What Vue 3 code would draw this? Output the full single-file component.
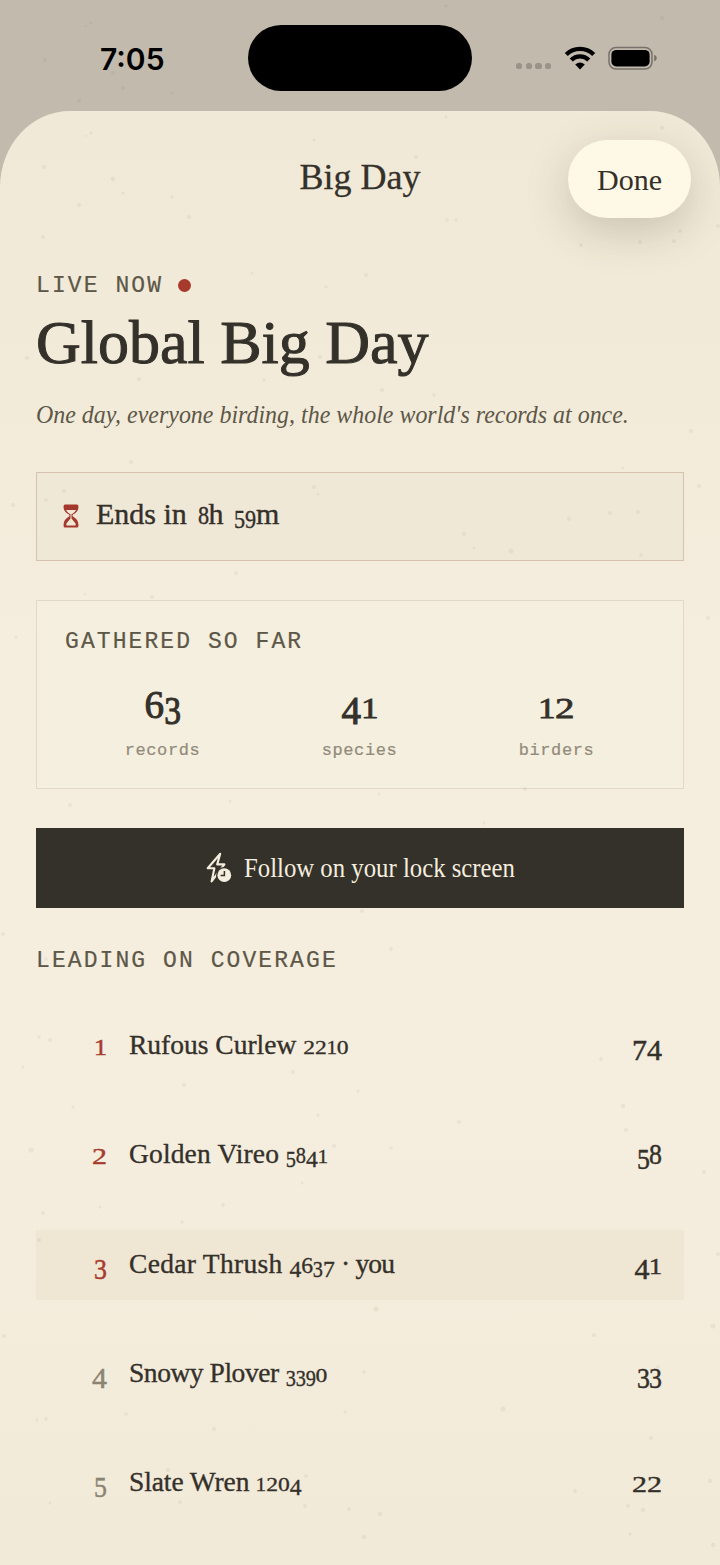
<script setup>
import { h } from 'vue'

// Old-style figures: 0-2 sit at x-height, 3/4/5/7/9 hang below the baseline.
const figureClass = (d) => ({
  fig: true,
  low: '012'.includes(d),
  hang: '34579'.includes(d),
  slim: '13589'.includes(d),
})
const Figures = (props) =>
  h('span', { class: 'figures' }, String(props.value).split('').map((d) => h('span', { class: figureClass(d) }, d)))
Figures.props = ['value']

const stats = [
  { value: 63, label: 'records' },
  { value: 41, label: 'species' },
  { value: 12, label: 'birders' },
]

const leaders = [
  { rank: 1, name: 'Rufous Curlew', num: '2210', score: 74, track: 0 },
  { rank: 2, name: 'Golden Vireo', num: '5841', score: 58, track: 0.15 },
  { rank: 3, name: 'Cedar Thrush', num: '4637', score: 41, track: 0.3, you: true },
  { rank: 4, name: 'Snowy Plover', num: '3390', score: 33, track: -0.45 },
  { rank: 5, name: 'Slate Wren', num: '1204', score: 22, track: -0.1 },
]

// Paper flecks: x, y, radius
const flecks = [
  [91, 23, 1.5], [86, 26, 1], [45, 60, 2], [113, 73, 2], [123, 88, 2], [172, 93, 1.5], [79, 101, 2], [662, 18, 2], [446, 6, 1.5],
  [91, 133, 1.5], [86, 136, 1], [44, 167, 2], [113, 179, 2.3], [123, 193, 1.6], [172, 197, 1.6], [79, 205, 2], [189, 217, 2], [43, 237, 2],
  [314, 140, 1.5], [416, 157, 2], [447, 220, 1.7], [456, 220, 1.7], [446, 117, 1.5], [662, 128, 2], [581, 245, 2], [640, 242, 2], [674, 241, 2], [680, 231, 2], [718, 226, 2],
  [252, 273, 1.6], [366, 275, 2], [326, 287, 1.6], [27, 358, 2], [139, 379, 2], [320, 357, 2], [264, 380, 1.5], [382, 390, 2], [434, 395, 1.8],
  [691, 431, 2], [699, 486, 2], [623, 468, 1.3], [131, 462, 2], [64, 491, 2], [46, 500, 1.8], [314, 487, 2], [318, 494, 1.5],
  [569, 519, 2], [610, 513, 2], [638, 512, 2], [464, 534, 2], [474, 548, 1.5], [511, 551, 2.5], [641, 555, 1.8], [236, 573, 2], [152, 597, 2], [85, 594, 1.3], [708, 618, 2], [13, 505, 2], [16, 637, 1.5],
  [379, 794, 1.5], [525, 789, 2], [484, 823, 1.5], [362, 911, 2], [46, 959, 1.7], [391, 949, 2], [3, 934, 2], [70, 805, 2], [230, 801, 1.5],
  [39, 1037, 1.8], [50, 1040, 2], [23, 1067, 1.6], [184, 1085, 2], [293, 1072, 2], [358, 1091, 1.6], [73, 1107, 1.6], [318, 1115, 1.6], [31, 1150, 2.6], [334, 1146, 2], [391, 1148, 1.8], [302, 1183, 1.5], [223, 1205, 2], [100, 1207, 1.5],
  [601, 1059, 2], [623, 1106, 2.2], [626, 1130, 2], [459, 1122, 2], [704, 1172, 2], [43, 1213, 2], [182, 1222, 1.8], [39, 1240, 2], [718, 1254, 2], [376, 1309, 2.6], [4, 1336, 2], [713, 1326, 2.5], [594, 1335, 2], [658, 1367, 1.8],
  [126, 1414, 1.8], [46, 1419, 1.8], [37, 1420, 1.5], [214, 1429, 2], [345, 1412, 1.5], [364, 1372, 1.8], [503, 1409, 2.6], [651, 1438, 2], [168, 1470, 2], [306, 1476, 2], [180, 1502, 2], [305, 1506, 2], [349, 1509, 2], [380, 1514, 2.3], [364, 1537, 2.3], [50, 1503, 1.5],
  [710, 1481, 2.2], [628, 1506, 2], [643, 1510, 2.3], [630, 1534, 1.7], [713, 1545, 2.2], [575, 1491, 2],
]
</script>

<template>
  <div class="screen">
    <header class="status">
      <div class="clock">7:05</div>
      <div class="island"></div>
      <div class="signals">
        <div class="cell"><i v-for="n in 4" :key="n"></i></div>
        <svg class="wifi" width="32" height="24" viewBox="0 0 32 24">
          <g fill="none" stroke="#000" stroke-width="4.3">
            <path d="M2.3 8.6A19.4 19.4 0 0 1 29.7 8.6" />
            <path d="M7.2 14A12.4 12.4 0 0 1 24.8 14" />
          </g>
          <path d="M16 23.4 11.2 18.6Q16 14.2 20.8 18.6Z" />
        </svg>
        <svg class="battery" width="50" height="24" viewBox="0 0 50 24">
          <rect x="1" y="1.4" width="43" height="21.6" rx="7" fill="none" stroke="#77716a" stroke-width="1.5" />
          <rect x="3.4" y="3.9" width="38.2" height="16.6" rx="4.8" />
          <path d="M46.2 8.7Q48.8 9.6 48.8 12.1Q48.8 14.7 46.2 15.6Z" fill="#77716a" />
        </svg>
      </div>
    </header>

    <main class="sheet">
      <div class="bar">
        <h1>Big Day</h1>
        <button class="done">Done</button>
      </div>

      <section class="content">
        <div class="live label"><span>LIVE NOW</span><i></i></div>
        <h2>Global Big Day</h2>
        <p class="tagline">One day, everyone birding, the whole world's records at once.</p>

        <div class="ends">
          <svg width="16" height="24" viewBox="0 0 16 24">
            <path d="M2 .5H14Q15.4.5 15.4 2V3.4Q15.4 7.6 10 10.6Q9 11.5 10 12.6Q15.4 15.6 15.4 20.6V22Q15.4 23.5 14 23.5H2Q.6 23.5.6 22V20.6Q.6 15.6 6 12.6Q7 11.5 6 10.6Q.6 7.6.6 3.4V2Q.6.5 2 .5Z" fill="#a5382c" />
            <path d="M3 6H13Q12 8.2 9.2 10.1H6.8Q4 8.2 3 6Z" fill="#f0e8d7" />
            <path d="M7.5 10H8.5V14.5L12.6 19.4V21.4H3.4V19.4L7.5 14.5Z" fill="#f0e8d7" />
          </svg>
          <span class="ends-text">Ends in <Figures value="8" />h <Figures value="59" />m</span>
        </div>

        <div class="gathered">
          <div class="label">GATHERED SO FAR</div>
          <div class="stats">
            <div v-for="s in stats" :key="s.label" class="stat">
              <strong><Figures :value="s.value" /></strong>
              <span>{{ s.label }}</span>
            </div>
          </div>
        </div>

        <button class="follow">
          <svg width="26" height="32" viewBox="0 0 26 32">
            <path d="M14.2 1.8 1.7 16.2H8.4L5.6 29.4 18.4 12.4H11.2Z" fill="none" stroke="#f5eedf" stroke-width="2.1" stroke-linejoin="round" />
            <circle cx="18.3" cy="23.2" r="8.2" fill="#34302a" />
            <circle cx="18.3" cy="23.2" r="6.9" fill="#f5eedf" />
            <path d="M18.4 19.1V23.5H14.6" fill="none" stroke="#34302a" stroke-width="1.5" />
          </svg>
          <span>Follow on your lock screen</span>
        </button>

        <div class="label leading">LEADING ON COVERAGE</div>
        <ol>
          <li v-for="l in leaders" :key="l.rank" :class="{ you: l.you, top: l.rank < 4 }">
            <span class="rank"><Figures :value="l.rank" /></span>
            <span class="name"><span :style="{ letterSpacing: l.track + 'px' }">{{ l.name }}</span>&nbsp;<Figures :value="l.num" /><span v-if="l.you" class="me"> · you</span></span>
            <span class="score"><Figures :value="l.score" /></span>
          </li>
        </ol>
      </section>
    </main>

    <svg class="flecks" width="720" height="1565" viewBox="0 0 720 1565">
      <circle v-for="(f, i) in flecks" :key="i" :cx="f[0]" :cy="f[1]" :r="f[2]" />
    </svg>
  </div>
</template>

<style>
body { background: #c2baac; }
</style>

<style scoped>
* { box-sizing: border-box; margin: 0; padding: 0; }
.screen {
  position: relative; width: 720px; height: 1565px; overflow: hidden;
  background: #c2baac; color: #34302a;
  font-family: "Liberation Serif", serif;
}
.flecks { position: absolute; left: 0; top: 0; fill: #77684a; opacity: .08; pointer-events: none; }
.status { position: relative; height: 111px; }
.clock {
  position: absolute; left: 100px; top: 39px;
  font: 600 30px/40px Inter, sans-serif; color: #000;
}
.island { position: absolute; left: 248px; top: 25px; width: 224px; height: 66px; border-radius: 33px; background: #000; }
.signals { position: absolute; left: 516px; top: 46px; display: flex; height: 24px; }
.cell { display: flex; gap: 3.4px; padding-top: 17px; width: 48px; }
.cell i { width: 6.3px; height: 6.3px; border-radius: 2.6px; background: #9a9387; }
.battery { margin-left: 12px; }

.sheet {
  height: 1454px; border-radius: 70px 70px 0 0 / 76px 76px 0 0; overflow: hidden;
  background: linear-gradient(#f0e9d7 0, #f2ebd9 300px, #f5eedf 530px, #f5eedf 1000px, #f2ead8 1454px);
}
.bar { display: grid; grid-template-columns: 1fr auto 1fr; align-items: center; padding: 29px 29px 0; height: 107px; }
h1 { grid-column: 2; font-size: 36px; font-weight: 400; line-height: 40px; padding-bottom: 4px; -webkit-text-stroke: .3px; }
.done {
  justify-self: end; width: 123px; height: 78px; border: 0; border-radius: 39px; padding-top: 2px;
  background: #fef8e7; color: #34302a; font: 30px "Liberation Serif", serif;
  box-shadow: 0 14px 44px rgba(70, 60, 40, .22);
}
.content { padding: 54px 36px 0; }
.label { font: 23px/28px "Liberation Mono", monospace; letter-spacing: 2.08px; color: #5d5748; -webkit-text-stroke: .2px; }
.live { display: flex; align-items: center; }
.live i { width: 13px; height: 13px; border-radius: 50%; background: #a83a2d; margin: -2px 0 0 15px; }
h2 { margin-top: 7px; font-size: 62px; line-height: 70px; font-weight: 400; -webkit-text-stroke: 1px; }
.tagline {
  margin-top: 22px; font-size: 25.8px; line-height: 32px; font-style: italic; color: #5d5748; white-space: nowrap;
  transform: scaleX(.928); transform-origin: 0 50%;
}
.ends {
  margin-top: 40.5px; height: 89px; border: 1px solid #d9c1b0; background: #f0e8d7;
  display: flex; align-items: center; padding: 0 26px; gap: 17px;
}
.ends-text { font-size: 30px; line-height: 36px; margin-top: -4px; -webkit-text-stroke: .4px; }
.gathered { margin-top: 39.5px; height: 188.5px; border: 1px solid #e1d9c8; background: #f5efdf; padding: 27px 28px 0; }
.stats { display: grid; grid-template-columns: repeat(3, 197px); margin: 29px 0 0 -1px; }
.stat { display: flex; flex-direction: column; align-items: center; }
.stat strong { font-weight: 400; font-size: 39px; line-height: 40px; -webkit-text-stroke: 1px; }
.stat span { white-space: nowrap; }
.stat > span { margin-top: 16px; font: 17px/20px "Liberation Mono", monospace; letter-spacing: .6px; color: #928b7b; -webkit-text-stroke: .2px; }
.follow {
  margin-top: 39px; width: 100%; height: 80px; border: 0; background: #34302a; color: #f5eedf;
  display: flex; align-items: center; padding-left: 170px; gap: 12px;
  font: 27px "Liberation Serif", serif;
}
.follow span { white-space: nowrap; transform: scaleX(.917); transform-origin: 0 50%; padding-top: 2px; }
.leading { margin-top: 39.5px; }
ol { list-style: none; margin-top: 36.2px; display: flex; flex-direction: column; gap: 39.3px; }
li { display: flex; align-items: center; height: 70px; padding-right: 22px; }
li.you { background: #efe6d4; }
.rank { width: 71px; text-align: right; font-size: 30px; color: #8b8473; -webkit-text-stroke: .5px; margin-top: -2px; }
.top .rank { color: #a83a2d; }
.name { flex: 1; margin-left: 22px; margin-top: -2px; font-size: 27.5px; white-space: nowrap; -webkit-text-stroke: .35px; }
.me { letter-spacing: -.8px; }
.score { font-size: 30px; -webkit-text-stroke: .5px; margin-top: -2px; }
.figures { display: inline-block; line-height: 1; }
.name .figures, .ends-text .figures { font-size: .86em; }
.ends-text .figures { margin-left: .13em; }
:deep(.fig) { display: inline-block; transform-origin: 50% 84%; }
:deep(.low) { transform: scaleY(.76); }
:deep(.hang) { transform: translateY(.15em); }
:deep(.slim) { margin: 0 -.04em; transform: scaleX(.86); }
:deep(.slim.low) { transform: scale(.9, .76); }
:deep(.slim.hang) { transform: translateY(.15em) scaleX(.86); }
</style>
